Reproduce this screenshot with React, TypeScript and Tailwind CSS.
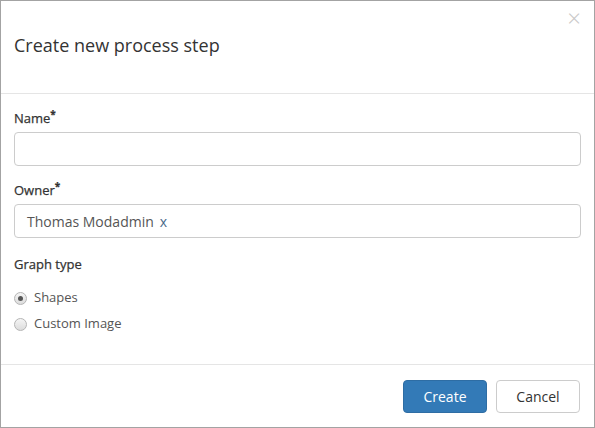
export default function App() {
  return (
    <div className="w-[595px] h-[428px] bg-white font-['Open_Sans',sans-serif] text-[#333]">
      <div className="relative w-full h-full border border-[#a3a3a3] flex flex-col">
        <div className="h-[93px] px-[13px] flex items-center border-b border-[#e5e5e5]">
          <h4 className="text-[18px] leading-none pb-[5px]">Create new process step</h4>
          <button className="absolute top-[5px] right-[13px] text-[#c8c8c8] text-[24px] font-light leading-none">×</button>
        </div>

        <div className="flex-1 px-[13px] pt-[15px]">
          <label className="block text-[13px] leading-[18px] [-webkit-text-stroke:0.25px_#333]">
            Name<sup className="text-[10px] font-bold">*</sup>
          </label>
          <div className="mt-[5px] h-[34px] rounded border border-[#ccc]" />

          <label className="block mt-[15px] text-[13px] leading-[18px] [-webkit-text-stroke:0.25px_#333]">
            Owner<sup className="text-[10px] font-bold">*</sup>
          </label>
          <div className="mt-[5px] h-[34px] rounded border border-[#ccc] flex items-center px-[12px] text-[14px] text-[#555]">
            Thomas Modadmin
            <span className="ml-[6px] text-[#4a6b8a]">x</span>
          </div>

          <div className="mt-[17px] text-[13px] leading-[18px] [-webkit-text-stroke:0.25px_#333]">Graph type</div>

          <div className="mt-[15px] flex flex-col gap-[6px] text-[13px] text-[#555]">
            <label className="h-[20px] flex items-center">
              <span className="w-[13px] h-[13px] rounded-full border border-[#b5b5b5] bg-gradient-to-b from-[#f5f5f5] to-[#dcdcdc] flex items-center justify-center">
                <span className="w-[5px] h-[5px] rounded-full bg-[#555]" />
              </span>
              <span className="ml-[7px]">Shapes</span>
            </label>
            <label className="h-[20px] flex items-center">
              <span className="w-[13px] h-[13px] rounded-full border border-[#b5b5b5] bg-gradient-to-b from-[#f5f5f5] to-[#dcdcdc]" />
              <span className="ml-[7px]">Custom Image</span>
            </label>
          </div>
        </div>

        <div className="h-[63px] border-t border-[#e5e5e5] flex items-start justify-end gap-[9px] pt-[15px] px-[14px]">
          <button className="w-[84px] h-[33px] rounded border border-[#2e6da4] bg-[#337ab7] text-white text-[14px]">
            Create
          </button>
          <button className="w-[84px] h-[33px] rounded border border-[#ccc] bg-white text-[#333] text-[14px]">
            Cancel
          </button>
        </div>
      </div>
    </div>
  );
}
